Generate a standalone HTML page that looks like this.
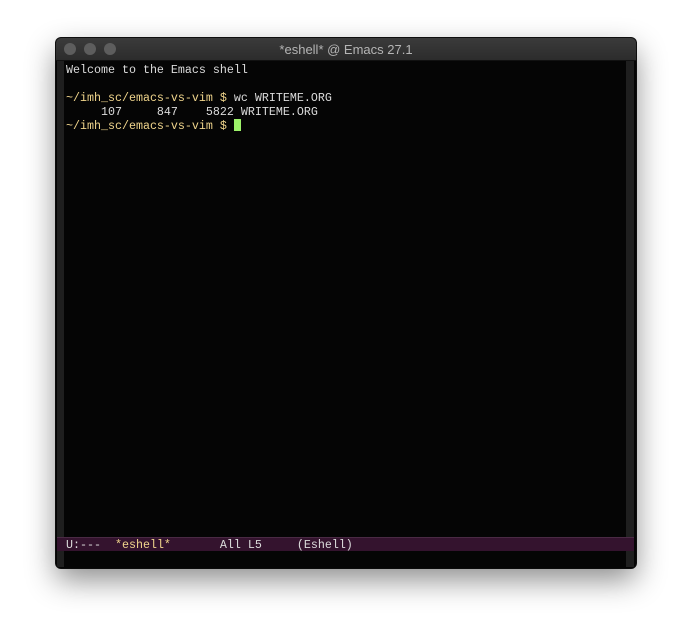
<!DOCTYPE html>
<html><head><style>
body{margin:0;width:692px;height:642px;background:#fff;position:relative;overflow:hidden;font-family:"Liberation Mono",monospace;}
.win{position:absolute;left:56px;top:38px;width:580px;height:530px;border-radius:5px;background:#050505;box-shadow:0 12px 30px rgba(0,0,0,0.45),0 0 0 1px #111;overflow:hidden;}
.title{position:absolute;left:0;top:0;width:580px;height:22px;background:linear-gradient(#3b3b3b,#2c2c2c);border-bottom:1px solid #111;}
.title span{position:absolute;left:0;right:0;top:4px;text-align:center;font:13px "Liberation Sans",sans-serif;color:#b5b5b5;}
.dot{position:absolute;top:5px;width:12px;height:12px;border-radius:50%;background:#5d5d5d;}
.fl{position:absolute;left:1px;top:23px;width:7px;height:506px;background:#1f1f1f;}
.fr{position:absolute;left:570px;top:23px;width:8px;height:506px;background:#1f1f1f;}
.txt{position:absolute;left:10px;top:25px;font-size:11.67px;line-height:14px;color:#dcdcdc;white-space:pre;}
.y{color:#f0d58c}
.cur{display:inline-block;width:7px;height:12px;background:#9df26a;vertical-align:-2px;}
.ml{position:absolute;left:1px;top:499px;width:577px;height:14px;background:#34132e;border-top:1px solid #4a2a44;font-size:11.67px;line-height:14px;color:#dcdcdc;white-space:pre;padding-left:9px;box-sizing:border-box;}
</style></head><body>
<div class="win">
<div class="title"><div class="dot" style="left:8px"></div><div class="dot" style="left:28px"></div><div class="dot" style="left:48px"></div><span>*eshell* @ Emacs 27.1</span></div>
<div class="fl"></div><div class="fr"></div>
<div class="txt">Welcome to the Emacs shell

<span class="y">~/imh_sc/emacs-vs-vim $</span> wc WRITEME.ORG
     107     847    5822 WRITEME.ORG
<span class="y">~/imh_sc/emacs-vs-vim $</span> <span class="cur"></span></div>
<div class="ml">U:---  <span class="y">*eshell*</span>       All L5     (Eshell)</div>
</div>
</body></html>
